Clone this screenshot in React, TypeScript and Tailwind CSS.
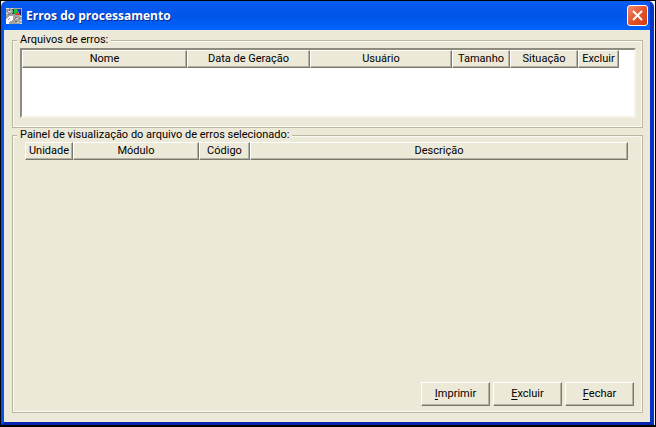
import { ReactNode } from 'react';
import { clsx } from 'clsx';

interface Column {
  label: string;
  width: string;
}

const FILE_COLUMNS: Column[] = [
  { label: 'Nome', width: 'w-[165px]' },
  { label: 'Data de Geração', width: 'w-[123px]' },
  { label: 'Usuário', width: 'w-[142px]' },
  { label: 'Tamanho', width: 'w-[58px]' },
  { label: 'Situação', width: 'w-[68px]' },
  { label: 'Excluir', width: 'w-[41px]' },
];

const ERROR_COLUMNS: Column[] = [
  { label: 'Unidade', width: 'w-[48px]' },
  { label: 'Módulo', width: 'w-[126px]' },
  { label: 'Código', width: 'w-[51px]' },
  { label: 'Descrição', width: 'w-auto' },
];

const RAISED = 'bg-[#ece9d8] border border-t-white border-l-white border-r-[#7b796d] border-b-[#7b796d] shadow-[inset_-1px_-1px_0_#b4b1a1]';

function HeaderTable({ columns, label, className }: { columns: Column[]; label: string; className?: string }) {
  return (
    <table aria-label={label} className={clsx('table-fixed border-separate border-spacing-0', className)}>
      <thead>
        <tr>
          {columns.map((col) => (
            <th key={col.label} scope="col" className={clsx('h-[18px] p-0 font-normal text-center whitespace-nowrap', RAISED, col.width)}>
              {col.label}
            </th>
          ))}
        </tr>
      </thead>
    </table>
  );
}

function Group({ title, className, children }: { title: string; className?: string; children: ReactNode }) {
  return (
    <fieldset className={clsx('min-w-0 border border-[#bab6a6] shadow-[inset_0_0_0_1px_#faf9f2]', className)}>
      <legend className="ml-1 px-[3px] leading-[14px] bg-[#ece9d8]">{title}</legend>
      {children}
    </fieldset>
  );
}

function ActionButton({ label }: { label: string }) {
  return (
    <button type="button" className={clsx('w-[69px] h-6', RAISED)}>
      <span className="underline underline-offset-2">{label[0]}</span>
      {label.slice(1)}
    </button>
  );
}

function AppIcon() {
  return (
    <svg width="16" height="16" viewBox="0 0 16 16" shapeRendering="crispEdges" aria-hidden="true">
      <rect width="16" height="16" fill="#a3a3a3" />
      <path d="M0 0h3v1H0zM5 0h2v1H5zM2 3h3v1H2zM0 5h2v1H0zM14 8h2v1h-2zM10 10h2v1h-2zM14 12h2v1h-2zM11 14h2v1h-2zM14 15h2v1h-2z" fill="#dcdcdc" />
      <path d="M3 1h1v2H3zM1 2h1v1H1zM4 5h1v1H4zM2 6h2v1H2zM9 9h2v1H9zM13 10h1v1h-1zM9 13h2v1H9zM8 11h1v1H8z" fill="#6f6f6f" />
      <path d="M6 1h2v1H6zM7 2h1v3H7zM6 5h2v1H6z" fill="#3c3c58" />
      <path d="M8 1h3v1h1v4H8z" fill="#12c53c" />
      <path d="M11 1h4v5h-2V4h-1V2h-1z" fill="#2230c8" />
      <path d="M9 6h1V5h1V4h1v1h1v1h1v1H9z" fill="#e03a34" />
      <path d="M14 4h1v3h-1z" fill="#1c1c44" />
      <path d="M0 11L4 8h3v3l-5 5H0z" fill="#fff" />
      <path d="M2 11h1v-1h1v1H3v1H2zM3 14h1v-1h1v1H4v1H3z" fill="#d98a7c" />
    </svg>
  );
}

export default function App() {
  return (
    <div className="min-h-screen bg-black px-px pt-px pb-[2px] flex font-[Roboto,Arial,sans-serif] text-[11px] leading-[14px] text-black">
      <div className="flex-1 min-w-0 flex bg-[#f6f3ea] pr-px">
        <main className="flex-1 min-w-0 flex flex-col rounded-t-[6px] bg-[#0046dc] border-l-[3px] border-r-4 border-b-[3px] border-l-[#0a50ee] border-r-[#0831c8] border-b-[#0626b0]">
          <header className="h-[29px] shrink-0 px-[2px] flex items-center gap-1 rounded-t-[4px] bg-linear-to-b from-[#0a5cf0] via-[#0054e6] to-[#0064ff]">
            <AppIcon />
            <h1 className="flex-1 font-['Open_Sans',sans-serif] font-bold text-[12px] leading-4 text-white [text-shadow:1px_1px_0_#0b2c91]">
              Erros do processamento
            </h1>
            <button
              type="button"
              aria-label="Fechar janela"
              className="size-[21px] flex items-center justify-center rounded-[3px] border border-white bg-linear-to-br from-[#f08d6c] via-[#e4532a] to-[#cf3d10]"
            >
              <svg width="11" height="11" viewBox="0 0 11 11" aria-hidden="true">
                <path d="M1 1l9 9M10 1l-9 9" stroke="#fff" strokeWidth="2" />
              </svg>
            </button>
          </header>

          <div className="flex-1 flex flex-col bg-[#ece9d8] pl-2 pr-[7px] pt-[3px] pb-[9px]">
            <Group title="Arquivos de erros:">
              <div className="h-[70px] ml-[7px] mr-[6px] mt-px mb-[9px] bg-white border-2 border-t-[#8f8c7d] border-l-[#8f8c7d] border-r-[#f5f3e8] border-b-[#f5f3e8]">
                <HeaderTable columns={FILE_COLUMNS} label="Arquivos de erros" className="w-[597px]" />
              </div>
            </Group>

            <Group title="Painel de visualização do arquivo de erros selecionado:" className="flex-1">
              <div className="h-full flex flex-col justify-between pl-3 pr-2 pb-[6px]">
                <div className="mr-[6px]">
                  <HeaderTable columns={ERROR_COLUMNS} label="Erros do arquivo selecionado" className="w-full" />
                </div>
                <div className="flex justify-end gap-[3px]">
                  <ActionButton label="Imprimir" />
                  <ActionButton label="Excluir" />
                  <ActionButton label="Fechar" />
                </div>
              </div>
            </Group>
          </div>
        </main>
      </div>
    </div>
  );
}
